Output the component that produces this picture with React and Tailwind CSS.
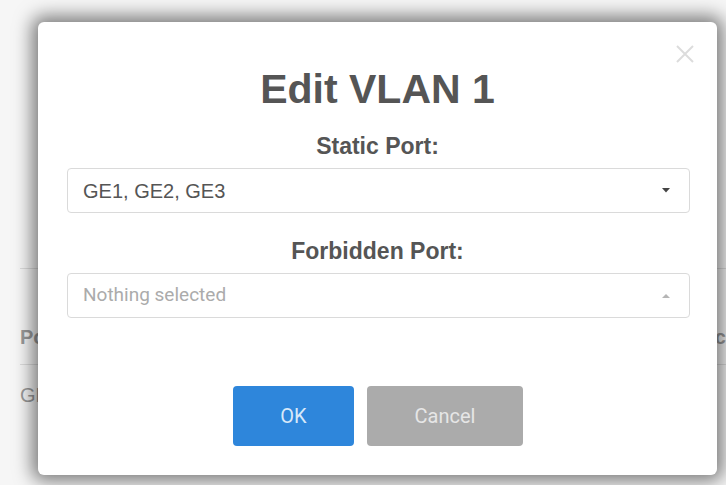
import React from 'react';

const Caret = ({ up, color }) => (
  <svg width="8" height="5" viewBox="0 0 8 5">
    {up ? (
      <path d="M0 5 L4 1 L8 5 Z" fill={color} />
    ) : (
      <path d="M0 0 L8 0 L4 4.5 Z" fill={color} />
    )}
  </svg>
);

const SelectBox = ({ value, placeholder, up }) => (
  <div className="ml-[29px] w-[623px] h-[45px] flex items-center justify-between border border-[#dadada] rounded-[4px] bg-white pl-[15px] pr-[19px]">
    {value ? (
      <span className="text-[20px] text-[#555] font-['Liberation_Sans',sans-serif]">{value}</span>
    ) : (
      <span className="text-[19px] text-[#ababab] font-['Roboto',sans-serif]">{placeholder}</span>
    )}
    <Caret up={up} color={up ? '#b5b5b5' : '#444'} />
  </div>
);

const App = () => {
  return (
    <div className="relative w-[726px] h-[485px] overflow-hidden bg-[#f6f6f6] font-['Liberation_Sans',sans-serif]">
      {/* page behind the dialog */}
      <div className="pt-[268px] pl-[20px] text-[20px] text-[#9a9a9a]">
        <div className="border-t border-[#dcdcdc] h-[96px] pt-[56px] flex justify-between">
          <span className="font-bold leading-[24px]">Port</span>
          <span className="font-bold leading-[24px]">Acc</span>
        </div>
        <div className="border-t border-[#dcdcdc] h-[60px] flex items-center">
          <span>GE1</span>
        </div>
      </div>

      {/* dialog */}
      <div className="absolute left-[38px] top-[22px] w-[679px] h-[453px] bg-white rounded-[6px] shadow-[0_0_18px_6px_rgba(0,0,0,0.5)]">
        <button className="absolute right-[22px] top-[23px] w-[20px] h-[18px]">
          <svg width="20" height="18" viewBox="0 0 20 18">
            <path d="M2 1 L18 17 M18 1 L2 17" stroke="#dcdcdc" strokeWidth="2" />
          </svg>
        </button>

        <h1 className="mt-[47px] h-[41px] leading-[41px] text-center text-[41px] font-bold text-[#555]">
          Edit VLAN 1
        </h1>

        <div className="mt-[25px] h-[23px] leading-[23px] text-center text-[23px] font-bold text-[#555]">
          Static Port:
        </div>
        <div className="mt-[10px]">
          <SelectBox value="GE1, GE2, GE3" />
        </div>

        <div className="mt-[27px] h-[23px] leading-[23px] text-center text-[23px] font-bold text-[#555]">
          Forbidden Port:
        </div>
        <div className="mt-[10px]">
          <SelectBox placeholder="Nothing selected" up />
        </div>

        <div className="mt-[68px] flex justify-center gap-[13px] pl-[1px] font-['Roboto',sans-serif]">
          <button className="w-[121px] h-[60px] rounded-[4px] bg-[#2e86db] text-[20px] text-[#d7e8f9]">
            OK
          </button>
          <button className="w-[156px] h-[60px] rounded-[4px] bg-[#ababab] text-[20px] text-[#e6e6e6]">
            Cancel
          </button>
        </div>
      </div>
    </div>
  );
};

export default App;
